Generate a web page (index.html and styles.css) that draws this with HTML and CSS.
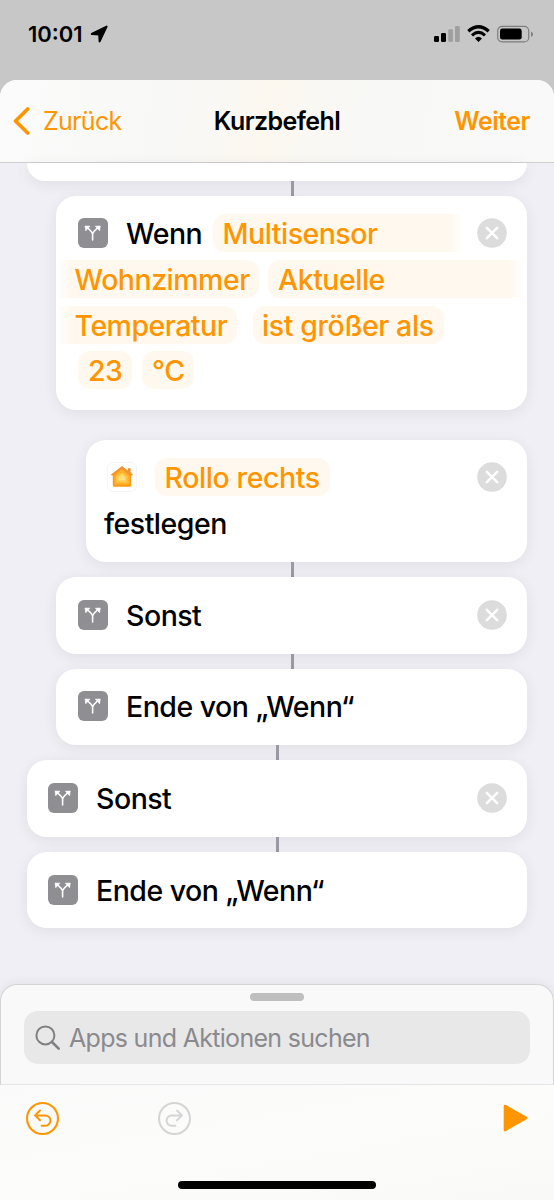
FILE: index.html
```html
<!DOCTYPE html>
<html lang="de">
<head>
    <meta charset="UTF-8">
    <meta name="viewport" content="width=device-width, initial-scale=1.0">
    <title>Kurzbefehl</title>
    <link rel="stylesheet" href="styles.css">
</head>
<body>

    <!-- Shared icons -->
    <svg class="symbols" width="0" height="0">
        <symbol id="branch" viewBox="0 0 30 30">
            <path d="M14.6 22V16.4C14.6 14.8 13.8 14 12.8 13L9 9.3M14.6 16.4C14.6 14.8 15.4 14 16.4 13L20.2 9.3" fill="none" stroke="#fff" stroke-width="1.6" stroke-linecap="round"/>
            <path d="M7 8L12 8.2L7.7 12.8ZM22.3 8L17.3 8.2L21.6 12.8Z" fill="#fff" stroke="#fff" stroke-width=".6" stroke-linejoin="round"/>
        </symbol>
        <symbol id="close" viewBox="0 0 30 30">
            <circle cx="15" cy="15" r="14.8" fill="#dcdcdc"/>
            <path d="M9.8 9.8L20.2 20.2M20.2 9.8L9.8 20.2" stroke="#fff" stroke-width="2.5" stroke-linecap="round"/>
        </symbol>
    </svg>

    <div class="phone">
        <!-- Status Bar -->
        <div class="status">
            <span class="time">10:01</span>
            <svg class="location" width="18" height="18" viewBox="0 0 18 18"><path d="M16.6 1.6L9.6 16.4L9.2 9.4L1.8 9Z" stroke="#000" stroke-width="2" stroke-linejoin="round"/></svg>
            <svg class="signal" width="27" height="18" viewBox="0 0 27 18">
                <rect x="0" y="11" width="5" height="6" rx="1.3"/>
                <rect x="7" y="8" width="5" height="9" rx="1.3"/>
                <rect x="14.3" y="4.3" width="4.6" height="12.7" rx="1.3" fill="#9f9f9f"/>
                <rect x="21" y="1" width="4.8" height="16" rx="1.3" fill="#9f9f9f"/>
            </svg>
            <svg class="wifi" width="23" height="18" viewBox="0 0 23 18">
                <path d="M1.3 6.3Q11.5-2.6 21.7 6.3" fill="none" stroke="#000" stroke-width="3.4"/>
                <path d="M5 10.3Q11.5 4.6 18 10.3" fill="none" stroke="#000" stroke-width="3.1"/>
                <path d="M8 13.4Q11.5 10.3 15 13.4L11.5 16.9Z"/>
            </svg>
            <svg class="battery" width="37" height="18" viewBox="0 0 37 18">
                <rect x=".7" y="1.3" width="31" height="15.6" rx="4.5" fill="none" stroke="#7d7d7d" stroke-width="1.2"/>
                <rect x="3" y="3.6" width="21.7" height="11" rx="2.3"/>
                <path d="M34 6.5Q36 7.5 36 9.2T34 12Z" fill="#7d7d7d"/>
            </svg>
        </div>

        <div class="sheet">
            <!-- Navigation -->
            <div class="nav">
                <div class="back">
                    <svg width="18" height="30" viewBox="0 0 18 30"><path d="M15.7 3L3.5 15L15.7 27" fill="none" stroke="#ff9500" stroke-width="3.7" stroke-linecap="round" stroke-linejoin="round"/></svg>
                    <span>Zurück</span>
                </div>
                <span class="nav-title">Kurzbefehl</span>
                <span class="next">Weiter</span>
            </div>

            <!-- Actions -->
            <div class="actions">
                <div class="card cut"></div>
                <div class="line inner"></div>

                <div class="card nested wenn">
                    <div class="row">
                        <svg class="icon"><use href="#branch"/></svg>
                        <span class="label wenn-label">Wenn</span>
                        <span class="pill multi">Multisensor</span>
                        <svg class="close"><use href="#close"/></svg>
                    </div>
                    <div class="row wrapped">
                        <span class="pill fade-left room">Wohnzimmer</span>
                        <span class="pill fade-right current">Aktuelle</span>
                    </div>
                    <div class="row wrapped">
                        <span class="pill fade-left temp">Temperatur</span>
                        <span class="pill greater">ist größer als</span>
                    </div>
                    <div class="row values">
                        <span class="pill number">23</span>
                        <span class="pill unit">°C</span>
                    </div>
                </div>

                <div class="card deep rollo">
                    <div class="row">
                        <svg class="icon home" viewBox="1 1 28 28">
                            <defs>
                                <linearGradient id="wall" x1="0" y1="0" x2="0" y2="1">
                                    <stop offset="0" stop-color="#f29335"/>
                                    <stop offset="1" stop-color="#fb9a0c"/>
                                </linearGradient>
                            </defs>
                            <path d="M20.9 6.2H23.6V11H20.9Z" fill="#ec8e38"/>
                            <path d="M15 4L26 12.6Q25.8 14 24.2 13.4V23.2Q24.2 24.8 22.6 24.8H7.4Q5.8 24.8 5.8 23.2V13.4Q4.2 14 4 12.6Z" fill="url(#wall)"/>
                            <path d="M15 7.2L22.7 13.3V22.8H7.3V13.3Z" fill="#fdb02a"/>
                            <path d="M15 10.2L20.5 14.5V20.7H9.5V14.5Z" fill="#fec94c"/>
                            <path d="M15 12.8L18.3 15.4V18.6H11.7V15.4Z" fill="#ffe27c"/>
                        </svg>
                        <span class="pill rollo-pill">Rollo rechts</span>
                        <svg class="close"><use href="#close"/></svg>
                    </div>
                    <div class="row"><span class="label set">festlegen</span></div>
                </div>
                <div class="line inner"></div>

                <div class="card nested single">
                    <svg class="icon"><use href="#branch"/></svg>
                    <span class="label sonst">Sonst</span>
                    <svg class="close"><use href="#close"/></svg>
                </div>
                <div class="line inner"></div>

                <div class="card nested single">
                    <svg class="icon"><use href="#branch"/></svg>
                    <span class="label end">Ende von „Wenn“</span>
                </div>
                <div class="line"></div>

                <div class="card single">
                    <svg class="icon"><use href="#branch"/></svg>
                    <span class="label sonst">Sonst</span>
                    <svg class="close"><use href="#close"/></svg>
                </div>
                <div class="line"></div>

                <div class="card single">
                    <svg class="icon"><use href="#branch"/></svg>
                    <span class="label end">Ende von „Wenn“</span>
                </div>
            </div>

            <!-- Search Drawer -->
            <div class="drawer">
                <div class="handle"></div>
                <div class="search">
                    <svg width="26" height="26" viewBox="0 0 26 26" fill="none" stroke="#808084" stroke-linecap="round">
                        <circle cx="10.4" cy="10.4" r="9" stroke-width="2"/>
                        <path d="M17 17L23.7 23.7" stroke-width="2.6"/>
                    </svg>
                    <span>Apps und Aktionen suchen</span>
                </div>
            </div>

            <!-- Toolbar -->
            <div class="toolbar">
                <div class="tools">
                    <svg class="undo" width="33" height="33" viewBox="0 0 32 32" fill="none" stroke="#ff9500" stroke-width="2" stroke-linecap="round" stroke-linejoin="round">
                        <circle cx="16" cy="16" r="15"/>
                        <path d="M13.6 8.3L8.7 13L13.6 17.7M8.9 13H18.7A5 5 0 0 1 18.7 23H15.2" stroke-width="1.9"/>
                    </svg>
                    <svg class="redo" width="33" height="33" viewBox="0 0 32 32" fill="none" stroke="#d5d5d5" stroke-width="2" stroke-linecap="round" stroke-linejoin="round">
                        <circle cx="16" cy="16" r="15"/>
                        <path d="M18.4 8.3L23.3 13L18.4 17.7M23.1 13H13.3A5 5 0 0 0 13.3 23H16.8" stroke-width="1.9"/>
                    </svg>
                    <svg class="play" width="25" height="28" viewBox="0 0 25 28"><path d="M2 2L23 14L2 26Z" fill="#ff9500" stroke="#ff9500" stroke-width="2.6" stroke-linejoin="round"/></svg>
                </div>
                <div class="home-bar"></div>
            </div>
        </div>
    </div>

</body>
</html>
```
FILE: styles.css
```css
/* General Styles */
* {
    box-sizing: border-box;
}

body {
    margin: 0;
    font-family: Inter, "Liberation Sans", sans-serif;
    background: #c7c7c7;
    color: #000;
}

svg {
    display: block;
    flex: none;
}

.symbols {
    position: absolute;
}

.phone {
    width: 554px;
    height: 1200px;
    overflow: hidden;
    display: flex;
    flex-direction: column;
    background: #c7c7c7;
}

/* Status Bar */
.status {
    height: 80px;
    flex: none;
    display: flex;
    align-items: flex-start;
    padding: 25px 20px 0 28px;
}

.time {
    font-size: 22px;
    line-height: 19px;
    font-weight: 600;
    letter-spacing: 0;
    width: 62px;
}

.signal {
    margin-left: auto;
}

.wifi {
    margin: 0 7px 0 6px;
}

/* Sheet */
.sheet {
    flex: 1;
    display: flex;
    flex-direction: column;
    border-radius: 17px 17px 0 0;
    overflow: hidden;
    background: #f0eff5;
}

.nav {
    height: 83px;
    flex: none;
    display: grid;
    grid-template-columns: 1fr auto 1fr;
    align-items: center;
    padding: 0 24px;
    font-size: 25px;
    border-bottom: 1px solid #cfcfd1;
    background: linear-gradient(100deg, #fbfbfb 0%, #f8f8f7 30%, #fcf8f0 48%, #f8f8f6 65%, #f9f9fa 100%);
}

.back {
    display: flex;
    align-items: center;
    gap: 13px;
    margin-left: -12px;
    color: #ff9500;
    letter-spacing: -0.7px;
}

.nav-title {
    font-weight: 600;
    letter-spacing: -0.6px;
}

.next {
    color: #ff9500;
    font-weight: 600;
    letter-spacing: -0.5px;
    text-align: right;
}

/* Actions */
.actions {
    height: 822px;
    flex: none;
    padding: 0 27px;
    display: flex;
    flex-direction: column;
}

.card {
    flex: none;
    background: #fff;
    border-radius: 20px;
    box-shadow: 0 3px 14px rgba(40, 40, 70, 0.08);
}

.cut {
    height: 18px;
    border-radius: 0 0 20px 20px;
}

.nested {
    margin-left: 29px;
}

.deep {
    margin-left: 59px;
}

.line {
    width: 3px;
    height: 15px;
    flex: none;
    align-self: center;
    background: #999aa3;
}

.inner {
    margin-left: 30px;
}

.row {
    display: flex;
    align-items: center;
    height: 38px;
    padding: 0 20px 0 22px;
}

.label,
.pill {
    height: 38px;
    font-size: 28.5px;
    line-height: 39px;
    font-weight: 500;
    white-space: nowrap;
    letter-spacing: -0.5px;
}

.row .label,
.row .pill {
    line-height: 40px;
}

.pill {
    padding: 0 9.5px;
    border-radius: 12px;
    background: #fff8ee;
    color: #ff9500;
}

.icon {
    width: 30px;
    height: 30px;
    border-radius: 6px;
    background: #8e8e93;
}

.icon + .label {
    margin-left: 18px;
}

.close {
    width: 30px;
    height: 30px;
    margin-left: auto;
}

/* Wenn card */
.wenn {
    height: 214px;
    padding-top: 18px;
    display: flex;
    flex-direction: column;
    gap: 7.8px;
}

.wenn-label {
    width: 87px;
}

.multi {
    width: 250px;
    border-radius: 12px 0 0 12px;
    background: linear-gradient(to right, #fff8ee 95%, #fff);
}

.wrapped {
    padding: 0;
}

.fade-left {
    padding-left: 18.5px;
    border-radius: 0 12px 12px 0;
    background: linear-gradient(to right, #fff 1%, #fff8ee 14px);
}

.fade-right {
    border-radius: 12px 0 0 12px;
    background: linear-gradient(to right, #fff8ee 94%, #fff);
}

.room {
    width: 203px;
}

.current {
    width: 256px;
    margin-left: 9px;
    padding-left: 10px;
}

.temp {
    width: 181px;
}

.greater {
    width: 191px;
    margin-left: 16px;
    padding-left: 9px;
    letter-spacing: -0.4px;
}

.number {
    width: 54px;
    padding-left: 10px;
}

.unit {
    width: 52px;
    margin-left: 10px;
    padding-left: 10px;
}

/* Rollo card */
.rollo {
    height: 122px;
    margin-top: 30px;
    padding-top: 18px;
    display: flex;
    flex-direction: column;
    gap: 8px;
}

.home {
    margin-left: -1px;
    background: #fff;
    border: 1px solid #f5f5f5;
}

.rollo-pill {
    width: 175px;
    margin-left: 18px;
    letter-spacing: -0.4px;
}

.set {
    margin-left: -4px;
}

/* Single line cards */
.single {
    height: 76.6px;
    display: flex;
    align-items: center;
    padding: 0 20px 1px 21px;
}

.nested.single {
    padding-left: 22px;
}

/* Search Drawer */
.drawer {
    height: 101px;
    flex: none;
    margin-top: -1px;
    padding: 8px 23px 0;
    border: 1px solid #d4d4d6;
    border-bottom-color: #e6e6e6;
    border-radius: 17px 17px 0 0;
    background: #f9f9f9;
    box-shadow: 0 0 12px rgba(40, 40, 70, 0.08);
}

.handle {
    width: 54px;
    height: 8px;
    margin: 0 auto 10px;
    border-radius: 4px;
    background: #bfbfbf;
}

.search {
    height: 53px;
    display: flex;
    align-items: center;
    gap: 8px;
    padding: 1px 0 0 11px;
    border-radius: 14px;
    background: #e8e8e8;
    color: #8a8a8e;
    font-size: 25px;
    letter-spacing: -0.7px;
}

/* Toolbar */
.toolbar {
    flex: 1;
    background: linear-gradient(170deg, #fafafa, #fcfcfb 50%, #f9f9f8);
}

.tools {
    height: 66px;
    display: flex;
    align-items: center;
    padding: 0 26px;
}

.redo {
    margin-left: 98.5px;
}

.play {
    margin-left: auto;
}

.home-bar {
    width: 198px;
    height: 8px;
    margin: 30px auto 0;
    border-radius: 4px;
    background: #000;
}
```
